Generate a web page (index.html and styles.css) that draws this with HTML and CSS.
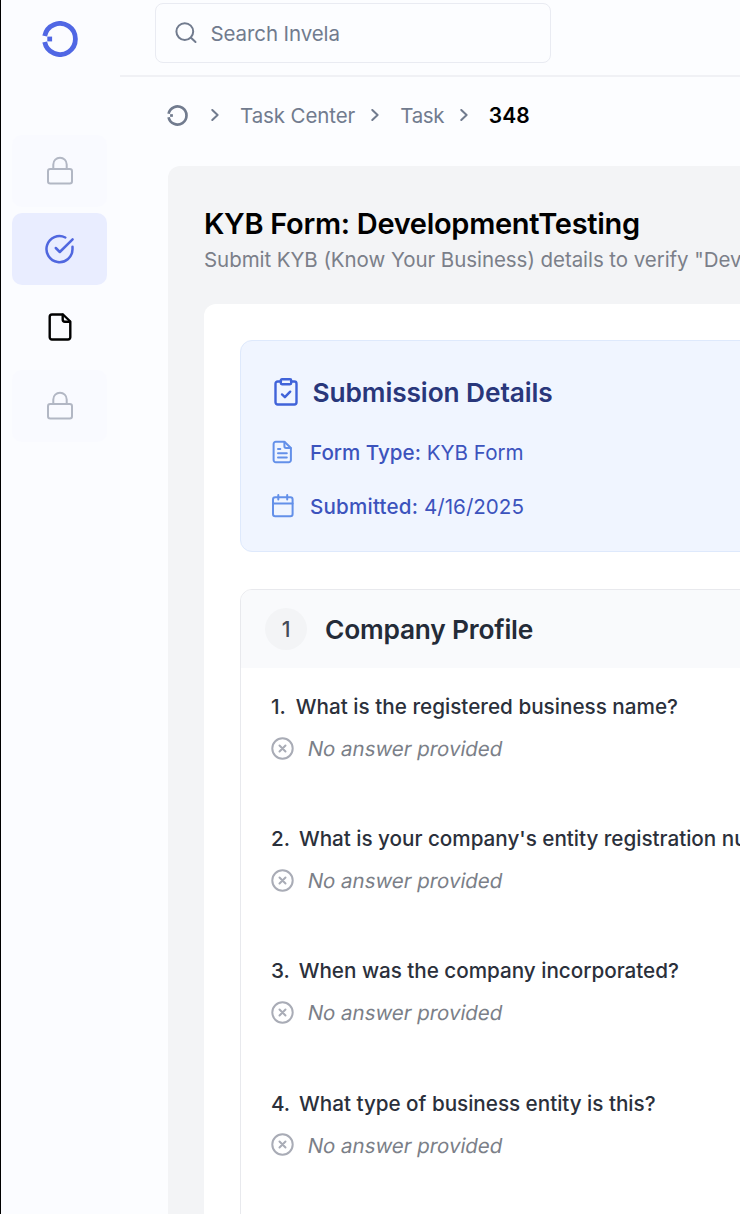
FILE: index.html
```html
<!DOCTYPE html>
<html lang="en">
<head>
<meta charset="utf-8">
<title>KYB Form: DevelopmentTesting</title>
<link rel="stylesheet" href="styles.css">
</head>
<body>
<svg class="defs" width="0" height="0" aria-hidden="true">
  <symbol id="lock" viewBox="0 0 28 30"><rect x="2" y="13" width="24" height="14.500" rx="2.200"/><path d="M7.300 13V8.400a6.700 6.700 0 0 1 13.400 0V13"/></symbol>
  <symbol id="ring" viewBox="0 0 36 36"><path d="M2.700 15A15.500 15.500 0 1 1 2.700 21"/><path d="M5.300 18h4.800"/></symbol>
  <symbol id="chevron" viewBox="0 0 8 12"><path d="M1.300 1l5.300 5-5.300 5"/></symbol>
  <symbol id="none" viewBox="0 0 24 24"><circle cx="11.500" cy="11.500" r="10.200"/><path d="M14.500 8.500l-6 6M8.500 8.500l6 6"/></symbol>
</svg>
<div class="app">
  <aside class="sidebar">
    <svg class="icon logo"><use href="#ring"/></svg>
    <nav class="nav">
      <div class="nav-item locked"><svg class="icon nav-icon"><use href="#lock"/></svg></div>
      <div class="nav-item active"><svg class="icon nav-check" viewBox="0 0 30 30"><path d="M27.500 12.700V15A13 13 0 1 1 20.300 3.500"/><path d="M27.600 5.300L14.800 18l-4-4"/></svg></div>
      <div class="nav-item"><svg class="icon nav-file" viewBox="0 0 24 28"><path d="M15 1.500H4A2.300 2.300 0 0 0 1.700 3.800v20.400A2.300 2.300 0 0 0 4 26.500h16a2.300 2.300 0 0 0 2.300-2.300V8.500z"/><path d="M14.700 1.800v4.800a2.200 2.200 0 0 0 2.200 2.200h5"/></svg></div>
      <div class="nav-item locked"><svg class="icon nav-icon"><use href="#lock"/></svg></div>
    </nav>
  </aside>
  <main class="main">
    <header class="topbar">
      <div class="search">
        <svg class="icon search-icon" viewBox="0 0 22 22"><circle cx="9.800" cy="9.600" r="8.400"/><path d="M16 15.800L20.500 20"/></svg>
        <span class="search-text">Search Invela</span>
      </div>
    </header>
    <nav class="crumbs">
      <svg class="icon crumb-logo"><use href="#ring"/></svg>
      <svg class="icon chevron"><use href="#chevron"/></svg>
      <span class="crumb">Task Center</span>
      <svg class="icon chevron"><use href="#chevron"/></svg>
      <span class="crumb crumb-task">Task</span>
      <svg class="icon chevron"><use href="#chevron"/></svg>
      <span class="current">348</span>
    </nav>
    <section class="panel">
      <h1 class="title">KYB Form: DevelopmentTesting</h1>
      <p class="subtitle">Submit KYB (Know Your Business) details to verify "DevelopmentTesting"</p>
      <div class="card">
        <div class="details">
          <h2 class="details-title"><svg class="icon clip" viewBox="0 0 24 28"><path d="M7 3.500H3.700A2.200 2.200 0 0 0 1.500 5.700v18.600a2.200 2.200 0 0 0 2.200 2.200h16.600a2.200 2.200 0 0 0 2.200-2.200V5.700a2.200 2.200 0 0 0-2.200-2.200H17"/><rect x="6.800" y="1.300" width="10.400" height="5" rx="1.200"/><path d="M8 16.400l2.900 2.800 5.300-5.500"/></svg><span>Submission Details</span></h2>
          <div class="detail-row"><svg class="icon detail-icon" viewBox="0 0 22 24"><path d="M12.400 1.700H3.800a2.200 2.200 0 0 0-2.200 2.200v16.200a2.200 2.200 0 0 0 2.200 2.200h12.900a2.200 2.200 0 0 0 2.200-2.200V8z"/><path d="M12.400 2v4.300a1.700 1.700 0 0 0 1.700 1.700h4.500M6 9h2.300M6 13.300h8.800M6 17.600h8.800"/></svg><span><b class="label">Form Type:</b> KYB Form</span></div>
          <div class="detail-row"><svg class="icon detail-icon" viewBox="0 0 22 24"><rect x="1" y="3.300" width="19.600" height="19" rx="2.200"/><path d="M1 9.500h19.600M6.300 1v4.500M15.200 1v4.500"/></svg><span class="date"><b class="label">Submitted:</b> 4/16/2025</span></div>
        </div>
        <div class="section">
          <div class="section-head"><span class="badge">1</span><h2 class="section-title">Company Profile</h2></div>
          <div class="questions">
            <div class="qa"><p class="question"><span>1.</span><span>What is the registered business name?</span></p><p class="answer"><svg class="icon none"><use href="#none"/></svg><span class="slanted">No answer provided</span></p></div>
            <div class="qa"><p class="question tight"><span>2.</span><span>What is your company's entity registration number?</span></p><p class="answer"><svg class="icon none"><use href="#none"/></svg><span class="slanted">No answer provided</span></p></div>
            <div class="qa"><p class="question tight"><span>3.</span><span>When was the company incorporated?</span></p><p class="answer"><svg class="icon none"><use href="#none"/></svg><span class="slanted">No answer provided</span></p></div>
            <div class="qa"><p class="question tight"><span>4.</span><span>What type of business entity is this?</span></p><p class="answer"><svg class="icon none"><use href="#none"/></svg><span class="slanted">No answer provided</span></p></div>
          </div>
        </div>
      </div>
    </section>
  </main>
</div>
</body>
</html>
```
FILE: styles.css
```css
* { box-sizing: border-box; }
body { margin: 0; background: #fcfdff; font-family: Inter, "Liberation Sans", sans-serif; font-size: 20.5px; overflow: hidden; }
h1, h2, p { margin: 0; }
.defs { display: block; }
.icon { display: block; flex: none; fill: none; stroke: currentColor; stroke-width: 2; stroke-linecap: round; stroke-linejoin: round; }
.app { display: flex; height: 1214px; overflow: hidden; border-left: 1px solid #000; white-space: nowrap; }
.sidebar { width: 119px; flex: none; padding: 21px 12px 0 11px; background: #fbfcff; }
.logo { width: 36px; height: 36px; margin-left: 29.5px; color: #5067e4; stroke-width: 4.8; stroke-linecap: butt; }
.nav { display: flex; flex-direction: column; gap: 6.3px; margin-top: 78px; }
.nav-item { display: flex; align-items: center; justify-content: center; width: 95px; height: 72px; border-radius: 10px; color: #000; }
.locked { background: #f9faff; color: #b2b7c4; }
.active { background: #e9edff; color: #5067df; }
.nav-icon { width: 28px; height: 30px; }
.nav-check { width: 30px; height: 30px; stroke-width: 2.5; }
.nav-file { width: 24px; height: 28px; margin-bottom: 2px; stroke-width: 2.4; }
.main { flex: none; width: 900px; }
.topbar { height: 77px; padding: 3px 0 0 35px; border-bottom: 2px solid #f0f1f5; }
.search { display: flex; align-items: center; gap: 13.5px; width: 396px; height: 60px; padding-left: 19px; border: 1px solid #e9ebf2; border-radius: 8px; color: #717b8e; letter-spacing: -0.1px; }
.search-icon { width: 22px; height: 22px; }
.crumbs { display: flex; align-items: center; height: 76px; padding-left: 47px; color: #717b8e; }
.crumb-logo { width: 21px; height: 21px; margin-right: 22.5px; stroke-width: 4.6; stroke-linecap: butt; }
.chevron { width: 8px; height: 12px; }
.crumb { margin: 0 15.5px 0 21.5px; letter-spacing: -0.1px; }
.crumb-task { letter-spacing: -0.3px; }
.current { margin-left: 21px; color: #000; font-size: 21px; font-weight: 600; }
.panel { width: 850px; height: 1100px; margin: 13px 0 0 48px; padding: 36px; background: #f3f4f6; border-radius: 12px; }
.title { height: 42px; line-height: 43px; font-size: 29px; font-weight: 600; letter-spacing: -0.3px; color: #000; }
.subtitle { height: 60px; line-height: 31px; letter-spacing: -0.06px; color: #7b7f89; }
.card { height: 1000px; padding: 36px; background: #fff; border-radius: 12px; }
.details { height: 212px; padding: 31px 31px; background: #f0f5ff; border: 1px solid #dee9fc; border-radius: 12px; color: #3c53bd; }
.details-title { display: flex; align-items: center; height: 40px; gap: 15px; padding-left: 1.5px; color: #29377b; font-size: 26.3px; font-weight: 600; letter-spacing: -0.1px; }
.clip { width: 24px; height: 28px; color: #4063d9; stroke-width: 2.4; }
.detail-row { display: flex; align-items: center; height: 32px; margin-top: 24px; gap: 16px; font-size: 20.6px; }
.detail-row + .detail-row { margin-top: 22px; }
.detail-icon { width: 22px; height: 24px; color: #6390e9; stroke-width: 2; }
.date .label { letter-spacing: 0.2px; }
.label { font-weight: 500; }
.section { height: 760px; margin-top: 37px; border: 1px solid #e8e9ed; border-radius: 12px; overflow: hidden; }
.section-head { display: flex; align-items: center; gap: 18px; height: 78px; padding-left: 24px; background: #f9fafc; }
.badge { display: flex; align-items: center; justify-content: center; width: 42px; height: 42px; border-radius: 50%; background: #f3f4f6; color: #444b57; font-size: 21px; font-weight: 500; }
.section-title { color: #242b38; font-size: 26.3px; font-weight: 600; letter-spacing: -0.2px; }
.questions { padding: 23px 30px; }
.qa { height: 132.2px; }
.question { display: flex; gap: 10px; height: 32px; line-height: 32px; color: #2b303b; font-size: 20.7px; font-weight: 500; }
.tight { gap: 9px; letter-spacing: -0.03px; }
.answer { display: flex; align-items: center; gap: 13px; height: 32px; margin-top: 9.5px; color: #7b7f88; letter-spacing: -0.03px; }
.slanted { transform: skewX(-10deg); }
.none { width: 24px; height: 24px; color: #a9acb6; }
```
